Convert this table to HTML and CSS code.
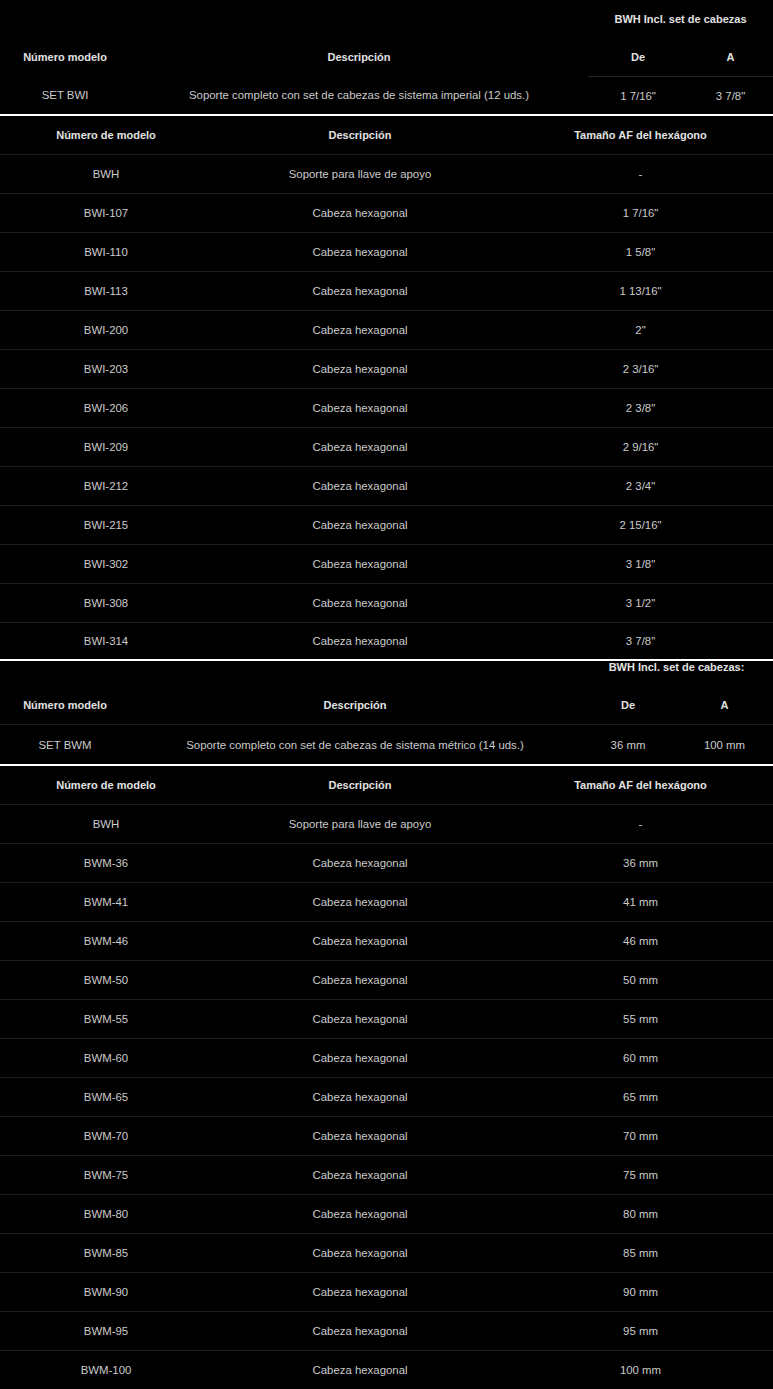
FILE: index.html
```html
<!DOCTYPE html>
<html lang="es">
<head>
<meta charset="utf-8">
<title>Juegos de cabezas hexagonales</title>
<link rel="stylesheet" href="styles.css">
</head>
<body>
<table class="tbl set-tbl">
  <colgroup><col class="c-a"><col class="c-b"><col class="c-c"><col class="c-d"></colgroup>
  <thead>
    <tr class="group-row"><th></th><th></th><th colspan="2">BWH Incl. set de cabezas</th></tr>
    <tr><th>Número modelo</th><th>Descripción</th><th class="ul">De</th><th class="ul">A</th></tr>
  </thead>
  <tbody>
    <tr class="set-row"><td>SET BWI</td><td>Soporte completo con set de cabezas de sistema imperial (12 uds.)</td><td>1 7/16"</td><td>3 7/8"</td></tr>
  </tbody>
</table>

<table class="tbl parts-tbl parts-first">
  <colgroup><col class="p-a"><col class="p-b"><col class="p-c"></colgroup>
  <thead><tr><th>Número de modelo</th><th>Descripción</th><th>Tamaño AF del hexágono</th></tr></thead>
  <tbody>
    <tr><td>BWH</td><td>Soporte para llave de apoyo</td><td>-</td></tr>
    <tr><td>BWI-107</td><td>Cabeza hexagonal</td><td>1 7/16"</td></tr>
    <tr><td>BWI-110</td><td>Cabeza hexagonal</td><td>1 5/8"</td></tr>
    <tr><td>BWI-113</td><td>Cabeza hexagonal</td><td>1 13/16"</td></tr>
    <tr><td>BWI-200</td><td>Cabeza hexagonal</td><td>2"</td></tr>
    <tr><td>BWI-203</td><td>Cabeza hexagonal</td><td>2 3/16"</td></tr>
    <tr><td>BWI-206</td><td>Cabeza hexagonal</td><td>2 3/8"</td></tr>
    <tr><td>BWI-209</td><td>Cabeza hexagonal</td><td>2 9/16"</td></tr>
    <tr><td>BWI-212</td><td>Cabeza hexagonal</td><td>2 3/4"</td></tr>
    <tr><td>BWI-215</td><td>Cabeza hexagonal</td><td>2 15/16"</td></tr>
    <tr><td>BWI-302</td><td>Cabeza hexagonal</td><td>3 1/8"</td></tr>
    <tr><td>BWI-308</td><td>Cabeza hexagonal</td><td>3 1/2"</td></tr>
    <tr><td>BWI-314</td><td>Cabeza hexagonal</td><td>3 7/8"</td></tr>
  </tbody>
</table>

<table class="tbl set-tbl set-tbl2">
  <colgroup><col class="c-a"><col class="c-b2"><col class="c-c2"><col class="c-d2"></colgroup>
  <thead>
    <tr class="group-row"><th></th><th></th><th colspan="2">BWH Incl. set de cabezas:</th></tr>
    <tr class="sep"><th>Número modelo</th><th>Descripción</th><th>De</th><th>A</th></tr>
  </thead>
  <tbody>
    <tr class="set-row"><td>SET BWM</td><td>Soporte completo con set de cabezas de sistema métrico (14 uds.)</td><td>36 mm</td><td>100 mm</td></tr>
  </tbody>
</table>

<table class="tbl parts-tbl">
  <colgroup><col class="p-a"><col class="p-b"><col class="p-c"></colgroup>
  <thead><tr><th>Número de modelo</th><th>Descripción</th><th>Tamaño AF del hexágono</th></tr></thead>
  <tbody>
    <tr><td>BWH</td><td>Soporte para llave de apoyo</td><td>-</td></tr>
    <tr><td>BWM-36</td><td>Cabeza hexagonal</td><td>36 mm</td></tr>
    <tr><td>BWM-41</td><td>Cabeza hexagonal</td><td>41 mm</td></tr>
    <tr><td>BWM-46</td><td>Cabeza hexagonal</td><td>46 mm</td></tr>
    <tr><td>BWM-50</td><td>Cabeza hexagonal</td><td>50 mm</td></tr>
    <tr><td>BWM-55</td><td>Cabeza hexagonal</td><td>55 mm</td></tr>
    <tr><td>BWM-60</td><td>Cabeza hexagonal</td><td>60 mm</td></tr>
    <tr><td>BWM-65</td><td>Cabeza hexagonal</td><td>65 mm</td></tr>
    <tr><td>BWM-70</td><td>Cabeza hexagonal</td><td>70 mm</td></tr>
    <tr><td>BWM-75</td><td>Cabeza hexagonal</td><td>75 mm</td></tr>
    <tr><td>BWM-80</td><td>Cabeza hexagonal</td><td>80 mm</td></tr>
    <tr><td>BWM-85</td><td>Cabeza hexagonal</td><td>85 mm</td></tr>
    <tr><td>BWM-90</td><td>Cabeza hexagonal</td><td>90 mm</td></tr>
    <tr><td>BWM-95</td><td>Cabeza hexagonal</td><td>95 mm</td></tr>
    <tr><td>BWM-100</td><td>Cabeza hexagonal</td><td>100 mm</td></tr>
  </tbody>
</table>
</body>
</html>
```

FILE: styles.css
```css
html, body {
  margin: 0;
  padding: 0;
  background: #000;
}

body {
  font-family: "Liberation Sans", Arial, sans-serif;
  font-size: 11px;
  color: #cbcbcb;
}

.tbl {
  width: 100%;
  border-collapse: collapse;
  table-layout: fixed;
}

.tbl th,
.tbl td {
  padding: 0;
  text-align: center;
  vertical-align: middle;
  height: 38px;
  white-space: nowrap;
}

.tbl td {
  font-size: 11.4px;
}

.tbl th {
  font-weight: bold;
  color: #e2e2e2;
}

/* set tables */
.c-a { width: 130px; }
.c-b { width: 458px; }
.c-c { width: 100px; }
.c-d { width: 85px; }

.c-b2 { width: 450px; }
.c-c2 { width: 96px; }
.c-d2 { width: 97px; }

.set-tbl .ul {
  border-bottom: 1px solid #262626;
}

.set-tbl .set-row td {
  height: 37px;
}

.set-tbl2 {
  border-top: 2px solid #fff;
}

.set-tbl2 .group-row th {
  height: 25px;
  vertical-align: top;
}

.set-tbl2 .sep th {
  border-bottom: 1px solid #1c1c1c;
}

.set-tbl2 .set-row td {
  height: 39px;
}

/* parts tables */
.parts-tbl {
  border-top: 2px solid #fff;
}

.p-a { width: 212px; }
.p-b { width: 296px; }
.p-c { width: 265px; }

.parts-tbl tr {
  border-bottom: 1px solid #1c1c1c;
}

.parts-tbl tbody tr:last-child {
  border-bottom: none;
}

.parts-first tbody tr:last-child td {
  height: 36px;
}
```
